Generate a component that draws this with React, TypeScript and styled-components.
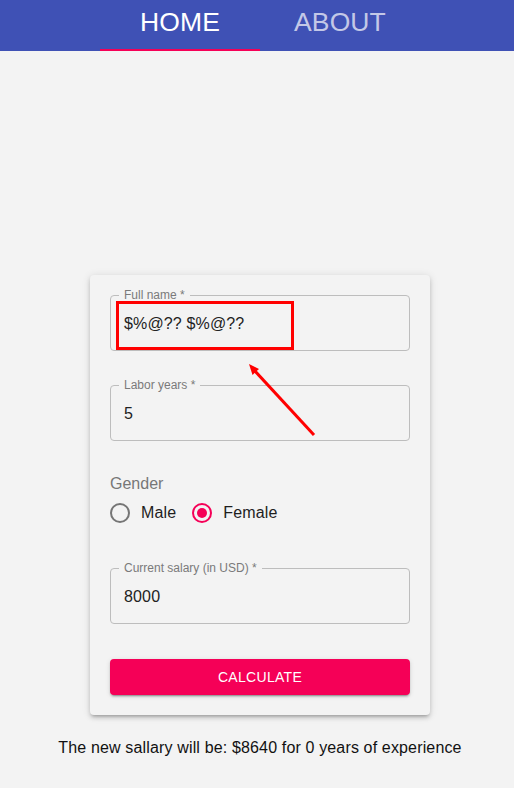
import React from "react";
import styled, { createGlobalStyle } from "styled-components";

const Global = createGlobalStyle`
  html, body { margin: 0; padding: 0; background: #f3f3f3; }
  body { font-family: "Liberation Sans", Arial, sans-serif; }
  * { box-sizing: border-box; }
`;

const Page = styled.div`
  position: relative;
  width: 514px;
  min-height: 788px;
  background: #f3f3f3;
  overflow: hidden;
`;

const AppBar = styled.header`
  height: 51px;
  background: #3f51b5;
  display: flex;
  justify-content: center;
  padding-left: 6px;
`;

const Tab = styled.div<{ $active?: boolean }>`
  width: 160px;
  height: 51px;
  display: flex;
  align-items: center;
  justify-content: center;
  padding-bottom: 4px;
  font-size: 26.5px;
  letter-spacing: 0.1px;
  text-transform: uppercase;
  color: ${(p) => (p.$active ? "#ffffff" : "rgba(255,255,255,0.7)")};
  border-bottom: 2px solid ${(p) => (p.$active ? "#f50057" : "transparent")};
`;

const Main = styled.main`
  display: flex;
  flex-direction: column;
  align-items: center;
  padding-left: 6px;
  padding-top: 224px;
`;

const Card = styled.form`
  width: 340px;
  padding: 20px;
  background: #f3f3f3;
  border-radius: 4px;
  box-shadow: 0 3px 3px -2px rgba(0, 0, 0, 0.2), 0 3px 4px 0 rgba(0, 0, 0, 0.14),
    0 1px 8px 0 rgba(0, 0, 0, 0.12);
  display: flex;
  flex-direction: column;
`;

const Field = styled.div<{ $gap?: number }>`
  position: relative;
  height: 56px;
  border: 1px solid #bdbdbd;
  border-radius: 4px;
  display: flex;
  align-items: center;
  padding: 0 13px;
  margin-top: ${(p) => p.$gap ?? 0}px;
`;

const FieldLabel = styled.span`
  position: absolute;
  top: -8px;
  left: 8px;
  padding: 0 5px;
  background: #f3f3f3;
  font-size: 12px;
  line-height: 14px;
  color: #7a7a7a;
`;

const FieldValue = styled.span`
  font-size: 16px;
  letter-spacing: 0.15px;
  color: #222222;
  padding-top: 2px;
`;

const GroupLabel = styled.div`
  margin-top: 35px;
  font-size: 16px;
  line-height: 16px;
  color: #777777;
`;

const RadioRow = styled.div`
  display: flex;
  align-items: center;
  height: 42px;
`;

const RadioOption = styled.label`
  display: flex;
  align-items: center;
  margin-left: -11px;
  margin-right: 16px;
  font-size: 16px;
  letter-spacing: 0.15px;
  color: #1e1e1e;
`;

const RadioIcon = styled.span`
  width: 42px;
  height: 42px;
  display: flex;
  align-items: center;
  justify-content: center;
`;

const Button = styled.button`
  margin-top: 35px;
  height: 36px;
  border: none;
  border-radius: 4px;
  background: #f50057;
  color: #ffffff;
  font-family: "Liberation Sans", Arial, sans-serif;
  font-size: 14px;
  letter-spacing: 0.3px;
  text-transform: uppercase;
  box-shadow: 0 3px 1px -2px rgba(0, 0, 0, 0.2), 0 2px 2px 0 rgba(0, 0, 0, 0.14),
    0 1px 5px 0 rgba(0, 0, 0, 0.12);
`;

const Result = styled.p`
  margin: 24px 0 0;
  font-size: 16px;
  line-height: 18px;
  letter-spacing: 0.15px;
  color: #111111;
`;

const Overlay = styled.svg`
  position: absolute;
  left: 0;
  top: 0;
  pointer-events: none;
`;

function Radio({ checked }: { checked?: boolean }) {
  const c = checked ? "#f50057" : "#757575";
  return (
    <RadioIcon>
      <svg width="24" height="24" viewBox="0 0 24 24">
        <circle cx="12" cy="12" r="9" fill="none" stroke={c} strokeWidth="2" />
        {checked && <circle cx="12" cy="12" r="5" fill={c} />}
      </svg>
    </RadioIcon>
  );
}

export default function App() {
  return (
    <Page>
      <Global />
      <AppBar>
        <Tab $active>Home</Tab>
        <Tab>About</Tab>
      </AppBar>
      <Main>
        <Card onSubmit={(e) => e.preventDefault()}>
          <Field>
            <FieldLabel>Full name *</FieldLabel>
            <FieldValue>$%@?? $%@??</FieldValue>
          </Field>
          <Field $gap={34}>
            <FieldLabel>Labor years *</FieldLabel>
            <FieldValue>5</FieldValue>
          </Field>
          <GroupLabel>Gender</GroupLabel>
          <RadioRow>
            <RadioOption>
              <Radio />
              Male
            </RadioOption>
            <RadioOption>
              <Radio checked />
              Female
            </RadioOption>
          </RadioRow>
          <Field $gap={34}>
            <FieldLabel>Current salary (in USD) *</FieldLabel>
            <FieldValue>8000</FieldValue>
          </Field>
          <Button type="submit">Calculate</Button>
        </Card>
        <Result>The new sallary will be: $8640 for 0 years of experience</Result>
      </Main>
      <Overlay width="514" height="788" viewBox="0 0 514 788">
        <rect x="117.5" y="302.5" width="175" height="46" fill="none" stroke="#ff0000" strokeWidth="3" />
        <line x1="314" y1="435" x2="255" y2="371" stroke="#ff0000" strokeWidth="3" />
        <polygon points="249,364 259,369 252.5,375" fill="#ff0000" />
      </Overlay>
    </Page>
  );
}
